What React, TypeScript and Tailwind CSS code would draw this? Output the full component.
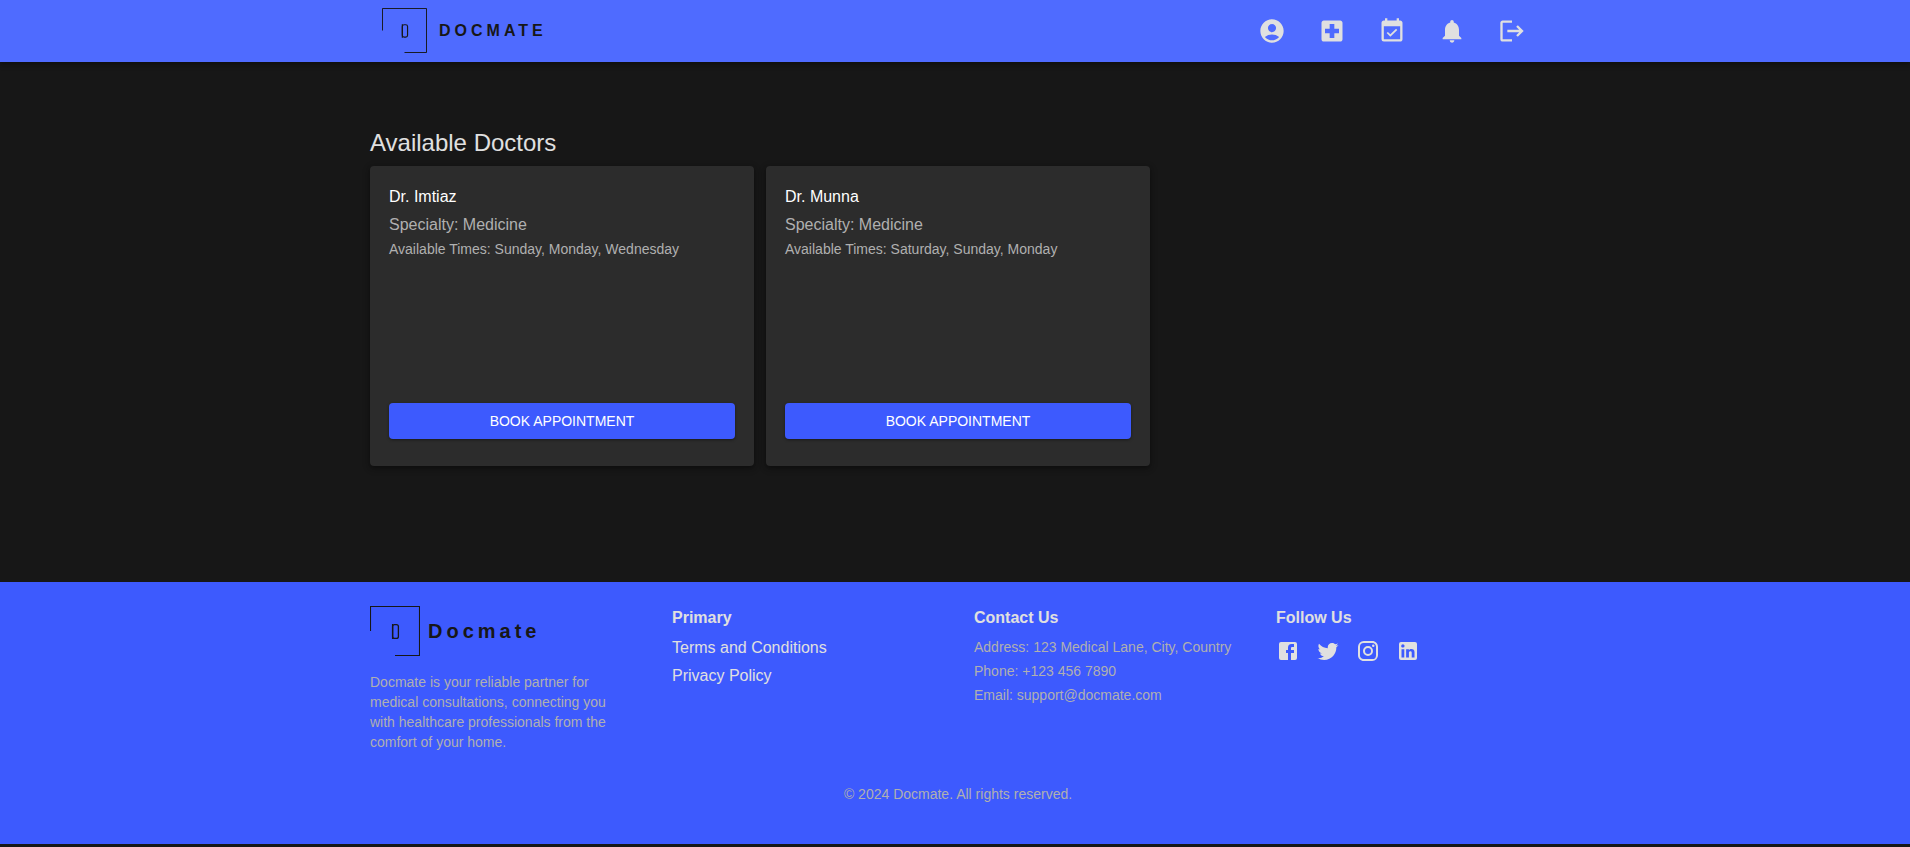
import type { ReactNode } from "react";
import { MdAccountCircle, MdEventAvailable, MdLocalHospital, MdLogout, MdNotifications } from "react-icons/md";

const doctors = [
  { name: "Dr. Imtiaz", specialty: "Medicine", times: "Sunday, Monday, Wednesday" },
  { name: "Dr. Munna", specialty: "Medicine", times: "Saturday, Sunday, Monday" },
];

const navItems = [
  { label: "Profile", Icon: MdAccountCircle },
  { label: "Doctors", Icon: MdLocalHospital },
  { label: "Appointments", Icon: MdEventAvailable },
  { label: "Notifications", Icon: MdNotifications },
  { label: "Log out", Icon: MdLogout },
];

const socials = [
  {
    label: "Facebook",
    d: "M5 3h14a2 2 0 0 1 2 2v14a2 2 0 0 1-2 2H5a2 2 0 0 1-2-2V5a2 2 0 0 1 2-2m13 2h-2.5A3.5 3.5 0 0 0 12 8.5V11h-2v3h2v7h3v-7h3v-3h-3V9a1 1 0 0 1 1-1h2V5z",
  },
  {
    label: "Twitter",
    d: "M22.46 6c-.77.35-1.6.58-2.46.69.88-.53 1.56-1.37 1.88-2.38-.83.5-1.75.85-2.72 1.05C18.37 4.5 17.26 4 16 4c-2.35 0-4.27 1.92-4.27 4.29 0 .34.04.67.11.98C8.28 9.09 5.11 7.38 3 4.79c-.37.63-.58 1.37-.58 2.15 0 1.49.75 2.81 1.91 3.56-.71 0-1.37-.2-1.95-.5v.03c0 2.08 1.48 3.82 3.44 4.21a4.22 4.22 0 0 1-1.93.07 4.28 4.28 0 0 0 4 2.98 8.521 8.521 0 0 1-5.33 1.84c-.34 0-.68-.02-1.02-.06C3.44 20.29 5.7 21 8.12 21 16 21 20.33 14.46 20.33 8.79c0-.19 0-.37-.01-.56.84-.6 1.56-1.36 2.14-2.23z",
  },
  {
    label: "Instagram",
    d: "M7.8 2h8.4C19.4 2 22 4.6 22 7.8v8.4a5.8 5.8 0 0 1-5.8 5.8H7.8C4.6 22 2 19.4 2 16.2V7.8A5.8 5.8 0 0 1 7.8 2m-.2 2A3.6 3.6 0 0 0 4 7.6v8.8C4 18.39 5.61 20 7.6 20h8.8a3.6 3.6 0 0 0 3.6-3.6V7.6C20 5.61 18.39 4 16.4 4H7.6m9.65 1.5a1.25 1.25 0 0 1 1.25 1.25A1.25 1.25 0 0 1 17.25 8 1.25 1.25 0 0 1 16 6.75a1.25 1.25 0 0 1 1.25-1.25M12 7a5 5 0 0 1 5 5 5 5 0 0 1-5 5 5 5 0 0 1-5-5 5 5 0 0 1 5-5m0 2a3 3 0 0 0-3 3 3 3 0 0 0 3 3 3 3 0 0 0 3-3 3 3 0 0 0-3-3z",
  },
  {
    label: "LinkedIn",
    d: "M19 3a2 2 0 0 1 2 2v14a2 2 0 0 1-2 2H5a2 2 0 0 1-2-2V5a2 2 0 0 1 2-2h14m-.5 15.5v-5.3a3.26 3.26 0 0 0-3.26-3.26c-.85 0-1.84.52-2.32 1.3v-1.11h-2.79v8.37h2.79v-4.93c0-.77.62-1.4 1.39-1.4a1.4 1.4 0 0 1 1.4 1.4v4.93h2.79M6.88 8.56a1.68 1.68 0 0 0 1.68-1.68c0-.93-.75-1.69-1.68-1.69a1.69 1.69 0 0 0-1.69 1.69c0 .93.76 1.68 1.69 1.68m1.39 9.94v-8.37H5.5v8.37h2.77z",
  },
];

function LogoMark({ className }: { className: string }) {
  return (
    <svg viewBox="0 0 50 50" fill="none" stroke="#171717" aria-hidden="true" className={className}>
      <path d="M.5 25V.5h49v49H25" strokeWidth="1.1" />
      <rect x="22.6" y="18.6" width="5.8" height="13.8" rx="2" strokeWidth="1.3" />
      <line x1="22.6" y1="18" x2="22.6" y2="33" strokeWidth="1.3" />
    </svg>
  );
}

function FooterColumn({ title, children }: { title: string; children: ReactNode }) {
  return (
    <section>
      <h3 className="mb-[5px] text-base leading-6 font-bold text-[#e0e0e0]">{title}</h3>
      {children}
    </section>
  );
}

export default function App() {
  return (
    <div className="flex min-h-screen flex-col bg-[#171717] font-['Liberation_Sans',Arial,sans-serif] text-[#e0e0e0]">
      <header className="bg-[#4f6bff] shadow-[0_2px_4px_rgba(0,0,0,0.2),0_4px_5px_rgba(0,0,0,0.14)]">
        <div className="mx-auto flex max-w-[1200px] items-center justify-between pt-2 pr-[29px] pb-[9px] pl-[27px]">
          <a href="#home" className="flex items-center gap-3 text-base leading-6 font-bold tracking-[4px] text-[#171717]">
            <LogoMark className="size-[45px]" />
            DOCMATE
          </a>
          <nav className="flex gap-8">
            {navItems.map(({ label, Icon }) => (
              <button key={label} type="button" aria-label={label} className="text-[#e0e0e0]">
                <Icon size={28} />
              </button>
            ))}
          </nav>
        </div>
      </header>

      <main className="mx-auto w-full max-w-[1200px] grow pt-[65px] pr-[9px] pb-[116px] pl-[15px]">
        <h1 className="mb-[7px] text-2xl leading-8 font-normal">Available Doctors</h1>
        <div className="grid grid-cols-3 gap-3">
          {doctors.map((doctor) => (
            <article
              key={doctor.name}
              className="flex min-h-[300px] flex-col rounded-[4px] bg-[#2c2c2c] px-[19px] pt-[17px] pb-[27px] shadow-[0_2px_4px_rgba(0,0,0,0.3),0_2px_8px_rgba(0,0,0,0.2)]"
            >
              <h2 className="mb-0.5 text-base leading-7 font-normal text-white">{doctor.name}</h2>
              <p className="text-base leading-6 text-[#b0b0b0]">Specialty: {doctor.specialty}</p>
              <p className="text-sm leading-6 text-[#b0b0b0]">Available Times: {doctor.times}</p>
              <button
                type="button"
                className="mt-auto rounded-[4px] bg-[#3d5afe] py-1.5 text-sm leading-6 text-white uppercase shadow-[0_1px_3px_rgba(0,0,0,0.4)]"
              >
                Book Appointment
              </button>
            </article>
          ))}
        </div>
      </main>

      <footer className="mb-[3px] bg-[#3d5afe]">
        <div className="mx-auto max-w-[1200px] pt-6 pr-[9px] pb-10 pl-[15px]">
          <div className="grid grid-cols-4 gap-8">
            <section>
              <a href="#home" className="flex items-center gap-2 text-xl leading-8 font-bold tracking-[4px] text-[#171717]">
                <LogoMark className="size-[50px]" />
                Docmate
              </a>
              <p className="mt-4 max-w-[256px] text-sm leading-5 text-[#b0b0b0]">
                Docmate is your reliable partner for medical consultations, connecting you with healthcare professionals from the
                comfort of your home.
              </p>
            </section>
            <FooterColumn title="Primary">
              <ul className="flex flex-col gap-1 pt-px">
                <li className="leading-6">
                  <a href="#terms">Terms and Conditions</a>
                </li>
                <li className="leading-6">
                  <a href="#privacy">Privacy Policy</a>
                </li>
              </ul>
            </FooterColumn>
            <FooterColumn title="Contact Us">
              <address className="text-sm leading-6 text-[#b0b0b0] not-italic">
                <p>Address: 123 Medical Lane, City, Country</p>
                <p>Phone: +123 456 7890</p>
                <p>Email: support@docmate.com</p>
              </address>
            </FooterColumn>
            <FooterColumn title="Follow Us">
              <div className="flex gap-4 pt-1">
                {socials.map(({ label, d }) => (
                  <a key={label} href={`#${label.toLowerCase()}`} aria-label={label}>
                    <svg viewBox="0 0 24 24" fill="currentColor" className="size-6">
                      <path d={d} />
                    </svg>
                  </a>
                ))}
              </div>
            </FooterColumn>
          </div>
          <p className="mt-8 text-center text-sm leading-5 text-[#b0b0b0]">© 2024 Docmate. All rights reserved.</p>
        </div>
      </footer>
    </div>
  );
}
